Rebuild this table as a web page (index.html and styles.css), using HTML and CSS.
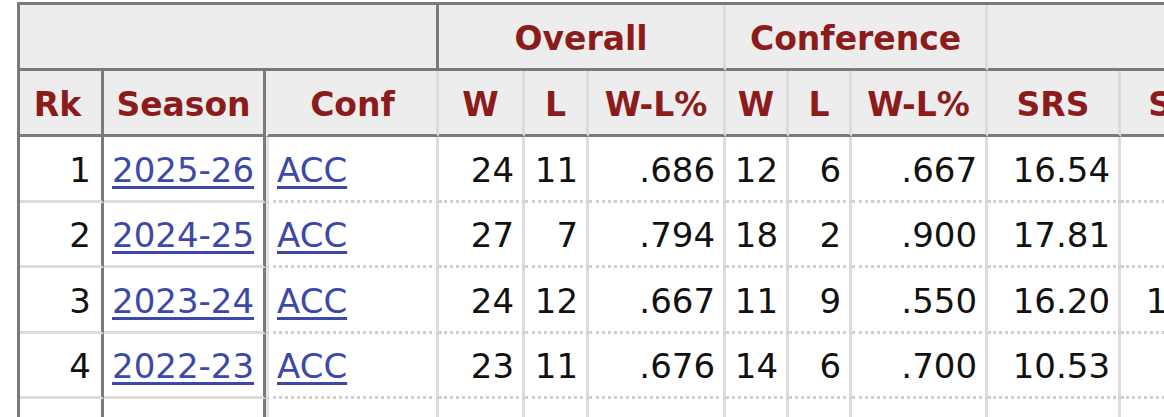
FILE: index.html
```html
<!DOCTYPE html>
<html lang="en">
<head>
<meta charset="utf-8">
<title>Seasons</title>
<link rel="stylesheet" href="styles.css">
</head>
<body>
<div class="wrap">
<table class="stats">
  <colgroup>
    <col class="c-rk"><col class="c-season"><col class="c-conf">
    <col class="c-w"><col class="c-l"><col class="c-pct">
    <col class="c-cw"><col class="c-cl"><col class="c-cpct">
    <col class="c-srs"><col class="c-sos"><col class="c-extra">
  </colgroup>
  <thead>
    <tr class="over">
      <th colspan="3" class="blank dark-r"></th>
      <th colspan="3">Overall</th>
      <th colspan="3">Conference</th>
      <th colspan="3" class="blank"></th>
    </tr>
    <tr class="sub">
      <th class="rk dark-r">Rk</th>
      <th class="dark-r">Season</th>
      <th class="conf">Conf</th>
      <th>W</th><th>L</th><th>W-L%</th>
      <th>W</th><th>L</th><th>W-L%</th>
      <th>SRS</th><th>SOS</th><th>AP Pre</th>
    </tr>
  </thead>
  <tbody>
    <tr>
      <td class="num dark-r fix rkc">1</td>
      <td class="dark-r fix"><a href="#">2025-26</a></td>
      <td class="conf"><a href="#">ACC</a></td>
      <td class="num">24</td><td class="num">11</td><td class="num">.686</td>
      <td class="num">12</td><td class="num">6</td><td class="num">.667</td>
      <td class="num">16.54</td><td class="num">9.87</td><td class="num"></td>
    </tr>
    <tr>
      <td class="num dark-r fix rkc">2</td>
      <td class="dark-r fix"><a href="#">2024-25</a></td>
      <td class="conf"><a href="#">ACC</a></td>
      <td class="num">27</td><td class="num">7</td><td class="num">.794</td>
      <td class="num">18</td><td class="num">2</td><td class="num">.900</td>
      <td class="num">17.81</td><td class="num">7.44</td><td class="num"></td>
    </tr>
    <tr>
      <td class="num dark-r fix rkc">3</td>
      <td class="dark-r fix"><a href="#">2023-24</a></td>
      <td class="conf"><a href="#">ACC</a></td>
      <td class="num">24</td><td class="num">12</td><td class="num">.667</td>
      <td class="num">11</td><td class="num">9</td><td class="num">.550</td>
      <td class="num">16.20</td><td class="num">11.09</td><td class="num"></td>
    </tr>
    <tr>
      <td class="num dark-r fix rkc">4</td>
      <td class="dark-r fix"><a href="#">2022-23</a></td>
      <td class="conf"><a href="#">ACC</a></td>
      <td class="num">23</td><td class="num">11</td><td class="num">.676</td>
      <td class="num">14</td><td class="num">6</td><td class="num">.700</td>
      <td class="num">10.53</td><td class="num">6.12</td><td class="num"></td>
    </tr>
    <tr>
      <td class="num dark-r fix rkc">5</td>
      <td class="dark-r fix"><a href="#">2021-22</a></td>
      <td class="conf"><a href="#">ACC</a></td>
      <td class="num">18</td><td class="num">16</td><td class="num">.529</td>
      <td class="num">10</td><td class="num">10</td><td class="num">.500</td>
      <td class="num">8.02</td><td class="num">5.51</td><td class="num"></td>
    </tr>
  </tbody>
</table>
</div>
</body>
</html>
```

FILE: styles.css
```css
html, body {
  margin: 0;
  padding: 0;
  background: #ffffff;
  overflow: hidden;
}

.wrap {
  padding: 2px 0 0 17px;
  width: 1600px;
}

.stats {
  border-collapse: separate;
  border-spacing: 0;
  table-layout: fixed;
  width: 1508px;
  border-top: 3px solid #7a7a7a;
  border-left: 3px solid #7a7a7a;
  font-family: "DejaVu Sans", Verdana, sans-serif;
  font-size: 34px;
  color: #111111;
}

.c-rk { width: 84px; }
.c-season { width: 162px; }
.c-conf { width: 173px; }
.c-w { width: 86px; }
.c-l { width: 64px; }
.c-pct { width: 137px; }
.c-cw { width: 63px; }
.c-cl { width: 63px; }
.c-cpct { width: 136px; }
.c-srs { width: 133px; }
.c-sos { width: 133px; }
.c-extra { width: 274px; }

.stats th,
.stats td {
  box-sizing: border-box;
  padding: 0 8px;
  border-right: 3px solid #dcdcdc;
  white-space: nowrap;
  overflow: hidden;
}

.stats th {
  background: #ededed;
  color: #8c1c1c;
  font-weight: bold;
  font-size: 33px;
  text-align: center;
  height: 66px;
  padding-top: 4px;
  border-bottom: 3px solid #7a7a7a;
}

.stats th.rk {
  padding-right: 14px;
}

.stats td {
  height: 65.5px;
  padding-top: 3px;
  background: #ffffff;
  border-bottom: 3px dotted #cfcfcf;
}

.stats td.rkc {
  padding-right: 10px;
}

.stats td.fix {
  border-bottom: 3px solid #dcdcdc;
}

.stats .dark-r {
  border-right: 3px solid #7a7a7a;
}

.stats .conf {
  border-left: 3px solid #e4e4e4;
}

.stats th.conf {
  border-left-color: #ededed;
}

.stats td.num {
  text-align: right;
}

.stats a {
  color: #3d49a8;
  text-decoration: underline;
  text-decoration-thickness: 3px;
  text-underline-offset: 4px;
}
```
